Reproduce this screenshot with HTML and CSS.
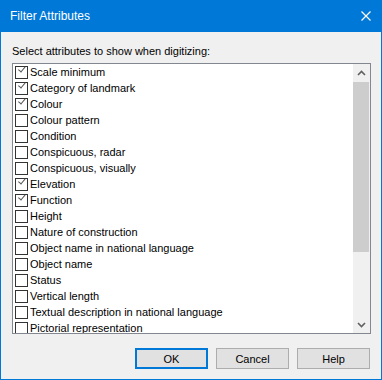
FILE: index.html
```html
<!DOCTYPE html>
<html lang="en">
<head>
<meta charset="UTF-8" />
<title>Filter Attributes</title>
<link rel="stylesheet" href="styles.css">
</head>
<body>
  <div class="dialog">
    <div class="titlebar">
      <span class="title">Filter Attributes</span>
      <svg class="close" width="10" height="10" viewBox="0 0 10 10">
        <path d="M0.5 0.5 L9.5 9.5 M9.5 0.5 L0.5 9.5" stroke="#fff" stroke-width="1.2" fill="none"/>
      </svg>
    </div>

    <div class="content">
      <p class="prompt">Select attributes to show when digitizing:</p>

      <div class="listbox">
        <ul class="items">
          <li class="checked"><span class="box"></span>Scale minimum</li>
          <li class="checked"><span class="box"></span>Category of landmark</li>
          <li class="checked"><span class="box"></span>Colour</li>
          <li><span class="box"></span>Colour pattern</li>
          <li><span class="box"></span>Condition</li>
          <li><span class="box"></span>Conspicuous, radar</li>
          <li><span class="box"></span>Conspicuous, visually</li>
          <li class="checked"><span class="box"></span>Elevation</li>
          <li class="checked"><span class="box"></span>Function</li>
          <li><span class="box"></span>Height</li>
          <li><span class="box"></span>Nature of construction</li>
          <li><span class="box"></span>Object name in national language</li>
          <li><span class="box"></span>Object name</li>
          <li><span class="box"></span>Status</li>
          <li><span class="box"></span>Vertical length</li>
          <li><span class="box"></span>Textual description in national language</li>
          <li><span class="box"></span>Pictorial representation</li>
        </ul>
        <div class="scrollbar">
          <div class="arrow">
            <svg width="9" height="6" viewBox="0 0 9 6"><path d="M1 5 L4.5 1.5 L8 5" stroke="#606060" stroke-width="1.6" fill="none"/></svg>
          </div>
          <div class="track"><div class="thumb"></div></div>
          <div class="arrow">
            <svg width="9" height="6" viewBox="0 0 9 6"><path d="M1 1 L4.5 4.5 L8 1" stroke="#606060" stroke-width="1.6" fill="none"/></svg>
          </div>
        </div>
      </div>

      <div class="buttons">
        <button class="btn default">OK</button>
        <button class="btn">Cancel</button>
        <button class="btn">Help</button>
      </div>
    </div>
  </div>
</body>
</html>
```

FILE: styles.css
```css
body {
  margin: 0;
  font-family: "Liberation Sans", Arial, sans-serif;
  font-size: 11px;
  color: #000;
}

.dialog {
  width: 382px;
  height: 380px;
  box-sizing: border-box;
  border: 1px solid #0078d7;
  border-top: none;
  background: #f0f0f0;
  display: flex;
  flex-direction: column;
}

/* Barra de titulo */
.titlebar {
  height: 31px;
  background: #0078d7;
  color: #fff;
  display: flex;
  align-items: center;
  justify-content: space-between;
  padding: 0 10px 1px 9px;
  flex-shrink: 0;
}
.title {
  font-size: 12px;
}

.content {
  flex: 1;
  display: flex;
  flex-direction: column;
  padding: 0 10px 0 11px;
}
.prompt {
  margin: 12px 0 0 0;
  height: 19px;
  line-height: 15px;
}

/* Lista */
.listbox {
  height: 271px;
  box-sizing: border-box;
  border: 1px solid #828790;
  background: #fff;
  display: flex;
}
.items {
  flex: 1;
  list-style: none;
  margin: 0;
  padding: 0;
  overflow: hidden;
}
.items li {
  height: 16px;
  display: flex;
  align-items: center;
  padding-left: 2px;
  white-space: nowrap;
}
.box {
  width: 13px;
  height: 13px;
  box-sizing: border-box;
  border: 1px solid #333;
  background: #fff;
  margin-right: 2px;
  flex-shrink: 0;
  position: relative;
}
.checked .box::after {
  content: "";
  position: absolute;
  left: 2px;
  top: 0px;
  width: 6px;
  height: 3px;
  border-left: 1px solid #555;
  border-bottom: 1px solid #555;
  transform: translate(0px, 3px) rotate(-50deg);
  transform-origin: left top;
}

.scrollbar {
  width: 17px;
  background: #f0f0f0;
  display: flex;
  flex-direction: column;
}
.arrow {
  height: 17px;
  display: flex;
  align-items: center;
  justify-content: center;
}
.track {
  flex: 1;
  padding-top: 1px;
}
.thumb {
  height: 170px;
  margin: 0 1px 0 0;
  background: #cdcdcd;
}

/* Botones */
.buttons {
  display: flex;
  justify-content: flex-end;
  gap: 8px;
  margin-top: 14px;
  padding-right: 1px;
}
.btn {
  width: 73px;
  height: 21px;
  box-sizing: border-box;
  border: 1px solid #adadad;
  background: #e1e1e1;
  font-family: inherit;
  font-size: 11px;
  color: #000;
  padding: 0;
}
.btn.default {
  border: 2px solid #0078d7;
}
```
